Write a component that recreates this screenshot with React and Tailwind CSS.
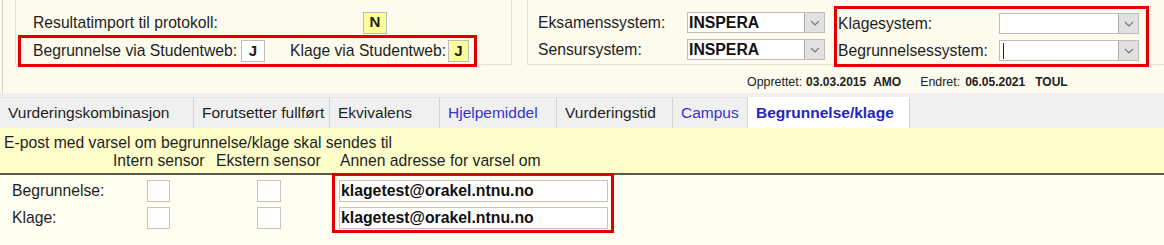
import React from "react";

const Chevron = () => (
  <svg width="10" height="6" viewBox="0 0 10 6" fill="none">
    <polyline points="1,1 5,5 9,1" stroke="#7a7a7a" strokeWidth="1.2" />
  </svg>
);

const Select = ({ value, width, caret }) => (
  <div className={`flex h-[21px] border border-[#bdbdbd] bg-white ${width}`}>
    <div className="flex-1 flex items-center pl-[1px] font-bold text-[15.8px] text-[#111] overflow-hidden">
      {caret && <span className="w-[1px] h-[16px] bg-[#222] ml-[2px]" />}
      {value}
    </div>
    <div className="w-[20px] h-full bg-[#e1e1e1] border-l border-[#adadad] flex items-center justify-center">
      <Chevron />
    </div>
  </div>
);

const Flag = ({ value, yellow, w }) => (
  <div className={`${w} h-[22px] border border-[#bdbdbd] flex items-center justify-center font-bold text-[15px] ${yellow ? "bg-[#fdfd99]" : "bg-white"}`}>
    {value}
  </div>
);

const tabs = [
  { label: "Vurderingskombinasjon", w: "w-[194px]" },
  { label: "Forutsetter fullført", w: "w-[136px]" },
  { label: "Ekvivalens", w: "w-[110px]" },
  { label: "Hjelpemiddel", w: "w-[117px]", blue: true },
  { label: "Vurderingstid", w: "w-[116px]" },
  { label: "Campus", w: "w-[75px]", blue: true },
  { label: "Begrunnelse/klage", w: "w-[162px]", active: true },
];

export default function App() {
  return (
    <div className="w-[1164px] h-[245px] overflow-hidden bg-[#fffef0] text-[#1e1e1e] font-['Liberation_Sans',Arial,sans-serif] text-[15.7px]">
      {/* top panels */}
      <div className="h-[93px] bg-[#fcfbee] pl-[2px]">
        <div className="h-full border-l border-[#d6d4c6] pl-[12px] flex flex-col">
          <div className="flex h-[65px]">
            <div className="w-[497px] h-full border-x border-b border-[#e4e2d4]">
              <div className="flex items-center h-[21px] mt-[12px] pl-[17px]">
                <span className="w-[330px]">Resultatimport til protokoll:</span>
                <Flag value="N" yellow w="w-[24px]" />
              </div>
              <div className="mt-[2px] ml-[2px] w-[459px] h-[32px] border-[3px] border-[#e00000] flex items-center pl-[12px]">
                <span className="w-[208px]">Begrunnelse via Studentweb:</span>
                <Flag value="J" w="w-[24px]" />
                <span className="ml-[25px] w-[158px]">Klage via Studentweb:</span>
                <Flag value="J" yellow w="w-[21px]" />
              </div>
            </div>
            <div className="flex-1 h-full ml-[15px] border-l border-b border-[#e4e2d4] flex">
              <div className="pl-[10px]">
                <div className="flex items-center h-[21px] mt-[12px]">
                  <span className="w-[149px]">Eksamenssystem:</span>
                  <Select value="INSPERA" width="w-[138px]" />
                </div>
                <div className="flex items-center h-[21px] mt-[6px]">
                  <span className="w-[149px]">Sensursystem:</span>
                  <Select value="INSPERA" width="w-[138px]" />
                </div>
              </div>
              <div className="ml-[9px] mt-[6px] w-[315px] h-[61px] border-[3px] border-[#e00000] pl-[1px]">
                <div className="flex items-center h-[21px] mt-[4px]">
                  <span className="w-[161px]">Klagesystem:</span>
                  <Select value="" width="w-[140px]" />
                </div>
                <div className="flex items-center h-[21px] mt-[6px]">
                  <span className="w-[161px]">Begrunnelsessystem:</span>
                  <Select value="" width="w-[140px]" caret />
                </div>
              </div>
            </div>
          </div>
          <div className="h-[28px] flex items-center pt-[6px] pl-[732px] text-[12.4px] text-[#222]">
            <span>Opprettet:</span>
            <span className="ml-[4px] font-bold text-[12px]">03.03.2015</span>
            <span className="ml-[7px] font-bold text-[12px]">AMO</span>
            <span className="ml-[19px]">Endret:</span>
            <span className="ml-[5px] font-bold text-[12px]">06.05.2021</span>
            <span className="ml-[10px] font-bold text-[12px]">TOUL</span>
          </div>
        </div>
      </div>

      {/* tabs */}
      <div className="h-[35px] bg-[#f0f0f0] flex items-end">
        {tabs.map((t) => (
          <div
            key={t.label}
            className={`${t.w} h-[31px] flex items-center pl-[8px] text-[15.5px] border-t border-r ${
              t.active
                ? "bg-white border-t-white border-r-[#d4d4d4] font-bold text-[#2424c4]"
                : "border-t-[#e6e6e6] border-r-[#d4d4d4]"
            } ${t.blue ? "text-[#3434d0]" : ""}`}
          >
            {t.label}
          </div>
        ))}
      </div>

      {/* yellow header */}
      <div className="h-[47px] bg-[#fefecb] pt-[6px] leading-[18px] border-b-2 border-[#5b5b4b]">
        <div className="pl-[4px]">E-post med varsel om begrunnelse/klage skal sendes til</div>
        <div className="flex pl-[113px]">
          <span className="w-[103px]">Intern sensor</span>
          <span className="w-[124px]">Ekstern sensor</span>
          <span>Annen adresse for varsel om</span>
        </div>
      </div>

      {/* rows */}
      <div className="flex">
        <div className="w-[332px] pt-[5px] pl-[12px]">
          {["Begrunnelse:", "Klage:"].map((l, i) => (
            <div key={l} className={`flex items-center h-[22px] ${i ? "mt-[5px]" : ""}`}>
              <span className="w-[135px]">{l}</span>
              <div className="w-[23px] h-[22px] bg-white border border-[#c4c4c4]" />
              <div className="ml-[87px] w-[24px] h-[22px] bg-white border border-[#c4c4c4]" />
            </div>
          ))}
        </div>
        <div className="-mt-[2px] w-[282px] h-[60px] border-[3px] border-[#e00000] pl-[4px] pt-[4px] flex flex-col gap-[5px]">
          {[0, 1].map((i) => (
            <div key={i} className="w-[269px] h-[22px] bg-white border border-[#c4c4c4] flex items-center pl-[1px] font-bold text-[15.8px] text-[#111]">
              klagetest@orakel.ntnu.no
            </div>
          ))}
        </div>
      </div>
    </div>
  );
}
